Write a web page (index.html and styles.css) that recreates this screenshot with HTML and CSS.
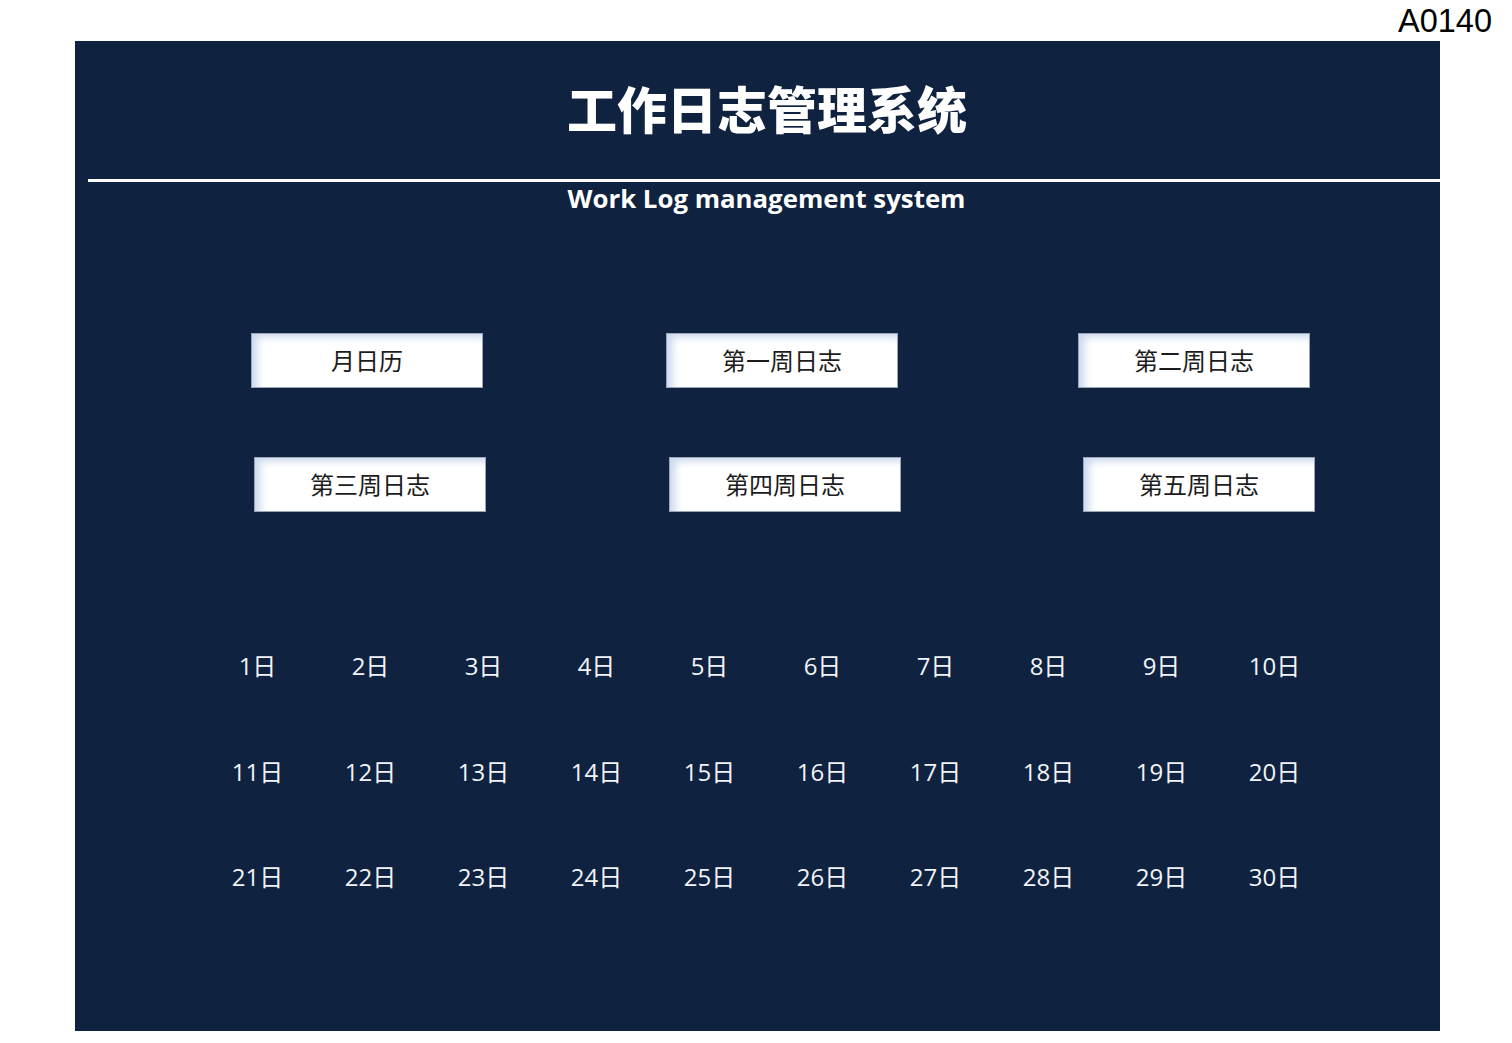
FILE: index.html
```html
<!DOCTYPE html>
<html lang="zh">
<head>
<meta charset="utf-8">
<title>工作日志管理系统</title>
<link rel="stylesheet" href="styles.css">
</head>
<body>
<div class="code">A0140</div>
<div class="panel">
  <h1 class="title">工作日志管理系统</h1>
  <div class="rule"></div>
  <div class="subtitle">Work Log management system</div>
  <div class="btn-row row1">
    <div class="btn">月日历</div>
    <div class="btn">第一周日志</div>
    <div class="btn">第二周日志</div>
  </div>
  <div class="btn-row row2">
    <div class="btn">第三周日志</div>
    <div class="btn">第四周日志</div>
    <div class="btn">第五周日志</div>
  </div>
  <div class="days">
    <span>1日</span><span>2日</span><span>3日</span><span>4日</span><span>5日</span><span>6日</span><span>7日</span><span>8日</span><span>9日</span><span>10日</span>
    <span>11日</span><span>12日</span><span>13日</span><span>14日</span><span>15日</span><span>16日</span><span>17日</span><span>18日</span><span>19日</span><span>20日</span>
    <span>21日</span><span>22日</span><span>23日</span><span>24日</span><span>25日</span><span>26日</span><span>27日</span><span>28日</span><span>29日</span><span>30日</span>
  </div>
</div>
</body>
</html>
```
FILE: styles.css
```css
html, body {
  margin: 0;
  padding: 0;
  background: #ffffff;
}
body {
  width: 1512px;
  height: 1043px;
  overflow: hidden;
  font-family: "Noto Sans CJK SC", "Noto Sans", sans-serif;
}
.code {
  height: 41px;
  box-sizing: border-box;
  text-align: right;
  padding-top: 2px;
  padding-right: 20px;
  font-family: "Liberation Sans", Arial, sans-serif;
  font-size: 32.5px;
  line-height: 38px;
  color: #000;
}
.panel {
  margin-left: 75px;
  width: 1365px;
  height: 990px;
  background: #0f223f;
  box-sizing: border-box;
  padding-top: 33px;
}
.title {
  margin: 0;
  padding-left: 19px;
  text-align: center;
  color: #ffffff;
  font-family: "Noto Sans CJK SC", sans-serif;
  font-weight: 900;
  font-size: 50px;
  line-height: 66px;
  height: 66px;
}
.rule {
  margin-top: 39px;
  margin-left: 13px;
  height: 3px;
  background: #ffffff;
}
.subtitle {
  padding-left: 18px;
  text-align: center;
  color: #ffffff;
  font-family: "Open Sans", "Noto Sans", sans-serif;
  font-weight: 700;
  font-size: 25.8px;
  line-height: 32px;
  margin-top: 0;
}
.btn-row {
  display: flex;
  gap: 183px;
}
.row1 {
  margin-top: 119px;
  padding-left: 176px;
}
.row1 .btn:last-child {
  margin-left: -3px;
}
.row2 {
  margin-top: 69px;
  padding-left: 179px;
}
.row2 .btn:last-child {
  margin-left: -1px;
}
.btn {
  width: 232px;
  height: 55px;
  box-sizing: border-box;
  border: 1px solid #9aa6b8;
  background: #ffffff;
  box-shadow: inset 8px 6px 8px -3px #c9d7ee;
  color: #1c1c1c;
  font-size: 24px;
  line-height: 51px;
  text-align: center;
}
.days {
  margin-top: 137px;
  margin-left: 126px;
  display: grid;
  grid-template-columns: repeat(10, 113px);
  grid-auto-rows: 105.5px;
  color: #f2f4f8;
  font-family: "Open Sans", "Noto Sans CJK SC", sans-serif;
  font-size: 24px;
  line-height: 34px;
}
.days span {
  text-align: center;
}
```
